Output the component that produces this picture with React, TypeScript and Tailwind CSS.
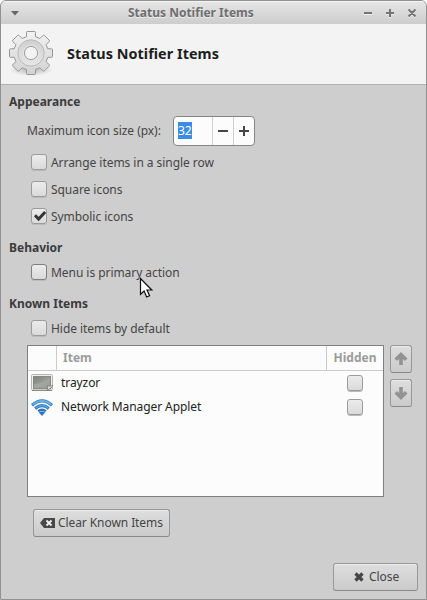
import type { ReactNode } from "react";

function Check({ checked = false, dark = false }: { checked?: boolean; dark?: boolean }) {
  return (
    <span
      className={`block h-4 w-4 shrink-0 rounded-[3px] border bg-linear-to-b from-[#ececec] to-[#dadada] shadow-[0_1px_0_#bababa] ${
        dark ? "border-[#808080]" : "border-[#9b9b9b]"
      }`}
    >
      {checked && (
        <svg className="block h-[14px] w-[14px] overflow-visible" viewBox="0 0 14 14">
          <path d="M3 6.3 L6.6 10 L13.2 3" fill="none" stroke="#353535" strokeWidth="3" />
        </svg>
      )}
    </span>
  );
}

function Option({ children, checked, dark }: { children: ReactNode; checked?: boolean; dark?: boolean }) {
  return (
    <label className="ml-[30px] flex h-[27px] items-center gap-1">
      <span className="mb-px"><Check checked={checked} dark={dark} /></span>
      <span>{children}</span>
    </label>
  );
}

function Heading({ children }: { children: ReactNode }) {
  return <h2 className="ml-2 h-[18px] leading-[18px] font-bold tracking-normal text-[#3c3c3c]">{children}</h2>;
}

const buttonClass =
  "flex items-center rounded-[3px] border border-[#989898] border-b-[#888] bg-linear-to-b from-[#dedede] to-[#cbcbcb] shadow-[inset_0_1px_0_#ececec]";

function Gear() {
  return (
    <svg className="h-12 w-12 shrink-0" viewBox="0 0 48 48">
      <defs>
        <linearGradient id="gear" x1="0" y1="0" x2="0" y2="1">
          <stop offset="0" stopColor="#f2f2f2" />
          <stop offset="1" stopColor="#d2d2d2" />
        </linearGradient>
        <linearGradient id="ring" x1="0" y1="0" x2="0" y2="1">
          <stop offset="0" stopColor="#d0d0d0" />
          <stop offset="1" stopColor="#e6e6e6" />
        </linearGradient>
        <radialGradient id="shade">
          <stop offset="0" stopColor="#777" stopOpacity=".55" />
          <stop offset="1" stopColor="#999" stopOpacity="0" />
        </radialGradient>
      </defs>
      <ellipse cx="24" cy="41" rx="22" ry="6" fill="url(#shade)" />
      <g transform="translate(24 24)">
        <path
          d="M-3.6-21.5h7.2q.9 0 .9.9v4.3l4.4 1.8 3-3q.8-.8 1.6 0l4.6 4.6q.8.8 0 1.6l-3 3 1.7 4.1h3.8q.9 0 .9.9v6.7q0 .9-.9.9h-3.8l-1.7 4.3 3 3q.8.8 0 1.6l-4.6 4.6q-.8.8-1.6 0l-3-3-4.4 1.8v4q0 .9-.9.9h-7.2q-.9 0-.9-.9v-4l-4.4-1.8-3 3q-.8.8-1.6 0l-4.6-4.6q-.8-.8 0-1.6l3-3-1.7-4.3h-3.8q-.9 0-.9-.9v-6.7q0-.9.9-.9h3.8l1.7-4.1-3-3q-.8-.8 0-1.6l4.6-4.6q.8-.8 1.6 0l3 3 4.4-1.8v-4.3q0-.9.9-.9z"
          fill="url(#gear)"
          stroke="#969696"
          strokeLinejoin="round"
        />
        <circle r="13.2" fill="url(#ring)" stroke="#bababa" />
        <circle r="7.8" fill="none" stroke="#e6e6e6" />
        <circle r="6.6" fill="#f3f3f3" stroke="#9c9c9c" />
      </g>
    </svg>
  );
}

function Monitor() {
  return (
    <svg className="h-[18px] w-[22px]" viewBox="0 0 22 18">
      <defs>
        <linearGradient id="screen" x1="0" y1="0" x2="1" y2="1">
          <stop offset="0" stopColor="#7d807b" />
          <stop offset=".5" stopColor="#999b95" />
          <stop offset="1" stopColor="#8b8e88" />
        </linearGradient>
      </defs>
      <rect x=".5" y=".5" width="21" height="15.5" rx="1" fill="#eeeeeb" stroke="#b4b6af" />
      <path d="M1 16.5h20" stroke="#8a8a84" />
      <rect x="2.5" y="2.5" width="17" height="12" fill="url(#screen)" stroke="#858883" />
      <path d="M3 10Q13 9 19 4V14H3z" fill="#fff" opacity=".12" />
      <path d="M15.8 16.6c1.2-1.8 1-3.4.7-5 1.4.8 3.5.5 5 0v1.2z" fill="#e6e6e2" stroke="#72756e" strokeWidth=".8" />
    </svg>
  );
}

function Wifi() {
  return (
    <svg className="h-[17px] w-[22px]" viewBox="0 0 22 17">
      <defs>
        <linearGradient id="wave" x1="0" y1="0" x2="0" y2="17" gradientUnits="userSpaceOnUse">
          <stop offset="0" stopColor="#68b6e8" />
          <stop offset="1" stopColor="#2166ae" />
        </linearGradient>
      </defs>
      <g fill="none" strokeLinecap="butt">
        <path d="M1 6.2Q11-2.4 21 6.2" stroke="#3178b5" strokeWidth="3.3" />
        <path d="M1.6 5.7Q11-2 20.4 5.7" stroke="#65b5e9" strokeWidth="1.6" />
        <path d="M4.2 9.5Q11 3.7 17.8 9.5" stroke="#2b73b4" strokeWidth="3" />
        <path d="M4.8 9Q11 4 17.2 9" stroke="#5aaae2" strokeWidth="1.3" />
        <path d="M7.2 12.3Q11 9.2 14.8 12.3" stroke="#2c74b9" strokeWidth="2.5" />
      </g>
      <path d="M8.3 13.6Q11 11.9 13.7 13.6L11 16.5z" fill="url(#wave)" stroke="#2166ae" strokeWidth=".7" />
    </svg>
  );
}

function Arrow({ down = false }: { down?: boolean }) {
  return (
    <button className={`${buttonClass} h-7 w-[22px] justify-center`}>
      <svg className={`h-[14px] w-[14px] shrink-0 ${down ? "rotate-180" : ""}`} viewBox="0 0 14 14">
        <path d="M7 3V13M1.8 7.8L7 2.6L12.2 7.8" fill="none" stroke="#929292" strokeWidth="3.6" />
      </svg>
    </button>
  );
}

function Row({ icon, name }: { icon: ReactNode; name: string }) {
  return (
    <div className="flex h-6 items-center pl-[3px] text-[#222]">
      <span className="w-[30px]">{icon}</span>
      <span className="flex-1 tracking-[-0.08px]">{name}</span>
      <span className="mr-5 mb-px"><Check /></span>
    </div>
  );
}

export default function App() {
  return (
    <div className="relative h-[600px] w-[427px] bg-white font-['Noto_Sans',sans-serif] text-[12px] leading-[18px] text-[#454545]">
      <div className="flex h-full flex-col overflow-hidden rounded-t-[6px] border border-[#919191] bg-[#cecece]">
        <header className="flex h-[23px] shrink-0 items-center bg-linear-to-b from-[#e6e6e6] to-[#cdcdcd] shadow-[inset_0_1px_0_#f4f4f4]">
          <svg className="ml-[9px] h-[6px] w-[10px]" viewBox="0 0 10 6"><path d="M1 1h8L5 5.5z" fill="#666" /></svg>
          <h1 className="mt-px ml-[108px] font-bold whitespace-nowrap text-[#6e6e6e] [text-shadow:0_1px_0_#eee]">Status Notifier Items</h1>
          <svg className="mr-[9px] ml-auto h-[10px] w-[54px]" viewBox="0 0 54 10">
            <g fill="none" stroke="#f1f1f1" strokeWidth="2" transform="translate(0 1)">
              <path d="M1 5h8M23 5h8M27 1v8M45.5 1.5l7 7M52.5 1.5l-7 7" />
            </g>
            <g fill="none" stroke="#747474" strokeWidth="2">
              <path d="M1 5h8M23 5h8M27 1v8M45.5 1.5l7 7M52.5 1.5l-7 7" />
            </g>
          </svg>
        </header>
        <section className="flex h-[61px] shrink-0 items-center border-b border-[#b1b1b1] bg-[#f3f3f3] pl-[6px]">
          <div className="mb-[2px]"><Gear /></div>
          <h2 className="ml-3 text-[14.4px] font-bold tracking-[0.05px] text-[#1d1d1d]">Status Notifier Items</h2>
        </section>
        <main className="flex flex-1 flex-col pt-2 tracking-[-0.05px]">
          <Heading>Appearance</Heading>
          <div className="mt-[5px] ml-[26px] flex h-[30px] items-center">
            <span className="w-[146px]">Maximum icon size (px):</span>
            <div className="flex h-[30px] w-[82px] rounded-[4px] border border-[#858585] bg-[#fcfcfc]">
              <span className="flex w-[38px] items-center pl-1"><span className="mb-px h-[17px] bg-[#3b8de4] leading-[17px] text-white">32</span></span>
              <span className="flex w-[21px] items-center justify-center border-l border-[#cfcfcf]"><svg className="h-3 w-3" viewBox="0 0 12 12"><path d="M1 6h10" stroke="#454545" strokeWidth="2" /></svg></span>
              <span className="flex w-[21px] items-center justify-center border-l border-[#cfcfcf]"><svg className="h-3 w-3" viewBox="0 0 12 12"><path d="M1 6h10M6 1v10" stroke="#454545" strokeWidth="2" /></svg></span>
            </div>
          </div>
          <div className="mt-[3px]">
            <Option>Arrange items in a single row</Option>
            <Option>Square icons</Option>
            <Option checked>Symbolic icons</Option>
          </div>
          <div className="mt-[9px]"><Heading>Behavior</Heading></div>
          <div className="mt-[2px]"><Option dark>Menu is primary action</Option></div>
          <div className="mt-[9px]"><Heading>Known Items</Heading></div>
          <div className="mt-[2px]"><Option>Hide items by default</Option></div>
          <div className="mt-[3px] ml-[26px] flex gap-[6px]">
            <div className="h-[152px] w-[357px] border border-[#808080] bg-[#fcfcfc]">
              <div className="flex h-[25px] border-b border-[#cbcbcb] leading-6 font-bold tracking-normal text-[#9b9b9b]">
                <span className="w-[29px] border-r border-[#cbcbcb]" />
                <span className="flex-1 pl-[6px]">Item</span>
                <span className="w-[57px] border-l border-[#cbcbcb] text-center">Hidden</span>
              </div>
              <Row icon={<Monitor />} name="trayzor" />
              <Row icon={<Wifi />} name="Network Manager Applet" />
            </div>
            <div className="flex flex-col gap-[6px]"><Arrow /><Arrow down /></div>
          </div>
          <button className={`${buttonClass} mt-3 ml-8 h-7 w-[137px] pl-[6px] tracking-[-0.08px]`}>
            <svg className="mr-[3px] mb-px h-[10px] w-[15px]" viewBox="0 0 15 10">
              <path d="M0 5L4 0h11v10H4z" fill="#484848" />
              <path d="M6.5 2.5l5 5M11.5 2.5l-5 5" stroke="#f2f2f2" strokeWidth="1.8" />
            </svg>
            Clear Known Items
          </button>
          <button className={`${buttonClass} mt-auto mr-2 mb-2 h-7 w-[85px] self-end pl-5`}>
            <svg className="mr-[5px] mb-px h-[10px] w-[10px]" viewBox="0 0 10 10"><path d="M1.5 1.5l7 7M8.5 1.5l-7 7" stroke="#454545" strokeWidth="3.2" /></svg>
            Close
          </button>
        </main>
      </div>
      <svg className="absolute top-[277px] left-[139px] h-[22px] w-[16px]" viewBox="0 0 16 22">
        <path d="M1.5 1.5v15.8l3.6-3.3 2.5 6 3-1.3-2.6-5.7h4.8z" fill="#fff" stroke="#111" strokeWidth="1.2" />
      </svg>
    </div>
  );
}
